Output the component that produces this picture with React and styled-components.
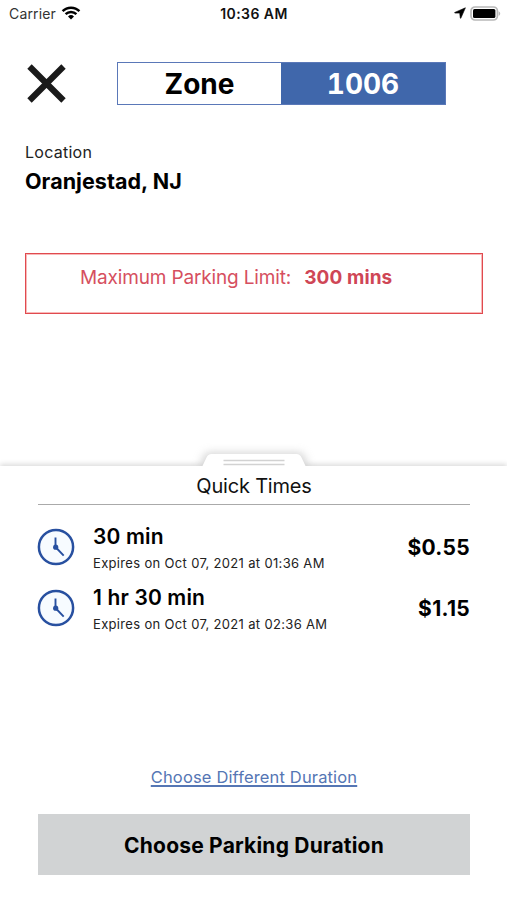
import React from 'react'
import styled, { createGlobalStyle } from 'styled-components';

const quickTimes = [
  { id: 1, label: '30 min', expires: 'Expires on Oct 07, 2021 at 01:36 AM', price: '$0.55' },
  { id: 2, label: '1 hr 30 min', expires: 'Expires on Oct 07, 2021 at 02:36 AM', price: '$1.15' },
];

const WifiIcon = () => (
  <svg width="20" height="16" viewBox="0 0 20 16" fill="none" stroke="#000">
    <path d="M1.6 6.1a11.9 11.9 0 0 1 16.8 0" strokeWidth="2.5" />
    <path d="M4.6 9.2a7.6 7.6 0 0 1 10.8 0" strokeWidth="2.4" />
    <path d="M10 14.6 7 11.5a4.3 4.3 0 0 1 6 0z" fill="#000" stroke="none" />
  </svg>
);

const LocationIcon = () => (
  <svg width="12" height="12" viewBox="0 0 12 12">
    <path d="M11.4.8.8 5.4c-.3.2-.3.7.1.7h4.8l.6 4.900c0 .4.4.5.6.1z" fill="#000" stroke="#000" strokeWidth=".6" />
  </svg>
);

const BatteryIcon = () => (
  <svg width="31" height="15" viewBox="0 0 31 15">
    <rect x="1" y="1" width="26.4" height="13" rx="4" fill="#fff" stroke="#b8b8b8" strokeWidth="1.7" />
    <rect x="3" y="3" width="22.4" height="9" rx="1.5" fill="#000" />
    <path d="M28.6 5.2v4.6c1-.4 1.6-1.3 1.6-2.3s-.6-1.9-1.6-2.3z" fill="#b8b8b8" />
  </svg>
);

const CloseIcon = () => (
  <svg width="40" height="40" viewBox="0 0 40 40">
    <path d="M2.5 2.5l34 34M36.5 2.5l-34 34" stroke="#1a1a1a" strokeWidth="6.2" />
  </svg>
);

const ClockIcon = () => (
  <svg width="38" height="38" viewBox="0 0 38 38" fill="none" stroke="#2850a0">
    <circle cx="19" cy="19" r="17.1" fill="#f7fbff" strokeWidth="2.5" />
    <path d="M18.5 9.6V19l8.2 8.7" strokeWidth="1.9" />
    <circle cx="18.7" cy="19.2" r="2.6" fill="#2850a0" stroke="none" />
  </svg>
);

// White tab that sticks out of the top of the sheet
const HandleShape = () => (
  <svg width="120" height="24" viewBox="0 0 120 24" overflow="visible">
    <defs>
      <filter id="handleShadow" x="-20%" y="-100%" width="140%" height="300%">
        <feGaussianBlur stdDeviation="4" />
      </filter>
      <clipPath id="aboveSheet">
        <rect x="-15" y="-12" width="150" height="29" />
      </clipPath>
    </defs>
    <g clipPath="url(#aboveSheet)">
      <path d="M5 19l5-12q1.5-3.5 5-3.5h90q3.5 0 5 3.5l5 12z" fill="#aaa" filter="url(#handleShadow)" opacity=".5" />
    </g>
    <path d="M8 18l4.5-9.5q1.5-3.5 5-3.5h85q3.5 0 5 3.5l4.5 9.5z" fill="#fff" />
    <path d="M29.5 11.5h61M29.5 15.5h61" stroke="#d2d2d2" strokeWidth="1.3" />
  </svg>
);

const App = () => {
  return (
    <Screen>
      <GlobalStyle />
      <StatusBar>
        <Carrier>Carrier <WifiIcon /></Carrier>
        <Clock>10:36 AM</Clock>
        <Indicators>
          <LocationIcon />
          <BatteryIcon />
        </Indicators>
      </StatusBar>

      <Header>
        <CloseButton aria-label="Close"><CloseIcon /></CloseButton>
        <ZoneBox>
          <ZoneCell>Zone</ZoneCell>
          <ZoneCell $filled>1006</ZoneCell>
        </ZoneBox>
      </Header>

      <Location>
        <LocationLabel>Location</LocationLabel>
        <LocationName>Oranjestad, NJ</LocationName>
      </Location>

      <LimitBox>
        <LimitLabel>Maximum Parking Limit:</LimitLabel>
        <LimitValue>300 mins</LimitValue>
      </LimitBox>

      <Sheet>
        <Handle><HandleShape /></Handle>
        <SheetTitle>Quick Times</SheetTitle>
        <TimeList>
          {quickTimes.map((time) => (
            <TimeRow key={time.id}>
              <ClockIcon />
              <TimeText>
                <TimeLabel>{time.label}</TimeLabel>
                <Expires>{time.expires}</Expires>
              </TimeText>
              <Price>{time.price}</Price>
            </TimeRow>
          ))}
        </TimeList>
        <DurationLink href="#">Choose Different Duration</DurationLink>
        <DurationButton>Choose Parking Duration</DurationButton>
      </Sheet>
    </Screen>
  )
}

const GlobalStyle = createGlobalStyle`
  * {
    box-sizing: border-box;
  }

  body {
    margin: 0;
    background: #fff;
    font-family: Inter, "Liberation Sans", sans-serif;
    color: #000;
  }

  svg {
    display: block;
    flex-shrink: 0;
  }
`;

const Screen = styled.div`
  display: flex;
  flex-direction: column;
  width: 507px;
  height: 900px;
  overflow: hidden;
`;

const StatusBar = styled.div`
  display: grid;
  grid-template-columns: 1fr auto 1fr;
  align-items: center;
  height: 26px;
  padding: 0 6px 0 9px;
  font-size: 14px;
`;

const Carrier = styled.div`
  display: flex;
  align-items: center;
  gap: 5px;
  color: #333;
  letter-spacing: 0.15px;
`;

const Clock = styled.div`
  font-weight: 600;
  letter-spacing: 0.45px;
  color: #111;
  margin-right: 2px;
`;

const Indicators = styled.div`
  display: flex;
  align-items: center;
  justify-content: flex-end;
  gap: 4px;
`;

const Header = styled.div`
  display: flex;
  align-items: center;
  gap: 50px;
  height: 43px;
  margin-top: 36px;
  padding-left: 27px;
`;

const CloseButton = styled.button`
  padding: 0;
  border: none;
  background: none;
  cursor: pointer;
`;

const ZoneBox = styled.div`
  display: grid;
  grid-template-columns: 163px 1fr;
  width: 329px;
  height: 43px;
  border: 1px solid #5a78b8;
`;

const ZoneCell = styled.div`
  display: flex;
  align-items: center;
  justify-content: center;
  font-size: 28px;
  font-weight: 700;
  font-variant-numeric: tabular-nums;
  background: ${props => props.$filled ? '#4067ab' : '#fff'};
  color: ${props => props.$filled ? '#fff' : '#000'};
`;

const Location = styled.div`
  margin: 37px 0 0 25px;
`;

const LocationLabel = styled.div`
  line-height: 20px;
  font-size: 16px;
  letter-spacing: 0.25px;
  color: #222;
`;

const LocationName = styled.div`
  margin-top: 5px;
  line-height: 28px;
  font-size: 21.5px;
  font-weight: 700;
  letter-spacing: 0.05px;
`;

const LimitBox = styled.div`
  display: flex;
  gap: 13px;
  width: 458px;
  height: 61px;
  margin: 58px 0 0 25px;
  padding: 11px 0 0 54px;
  border: 1px solid #e04a4f;
  box-shadow: inset 0 0 0 1px rgba(240, 80, 80, 0.4);
  line-height: 26px;
  font-size: 19px;
  color: #d64f60;
`;

const LimitLabel = styled.span`
  letter-spacing: -0.15px;
`;

const LimitValue = styled.span`
  font-weight: 700;
  letter-spacing: 0.1px;
  color: #cf4656;
`;

const Sheet = styled.div`
  position: relative;
  display: flex;
  flex-direction: column;
  flex: 1;
  margin-top: 152px;
  padding: 0 37px 25px 38px;
  background: #fff;
  box-shadow: 0 -2px 5px rgba(0, 0, 0, 0.14);
`;

const Handle = styled.div`
  position: absolute;
  top: -17px;
  left: 194px;
`;

const SheetTitle = styled.div`
  position: relative;
  height: 39px;
  border-bottom: 1px solid #aaa;
  line-height: 40px;
  font-size: 20px;
  letter-spacing: -0.2px;
  text-align: center;
  color: #111;
`;

const TimeList = styled.div`
  margin: 11px 0 0 -1px;
`;

const TimeRow = styled.div`
  display: flex;
  align-items: center;
  height: 61px;
`;

const TimeText = styled.div`
  flex: 1;
  margin: -2px 0 0 18px;
`;

const TimeLabel = styled.div`
  line-height: 28px;
  font-size: 21px;
  font-weight: 600;
  letter-spacing: 0.15px;
`;

const Expires = styled.div`
  margin: 2px 0 -5px;
  line-height: 20px;
  font-size: 13px;
  letter-spacing: 0.33px;
  color: #222;
`;

const Price = styled.div`
  margin-top: 2px;
  font-size: 21px;
  font-weight: 700;
  letter-spacing: 0.3px;
`;

const DurationLink = styled.a`
  align-self: center;
  margin-top: auto;
  line-height: 22px;
  font-size: 16.5px;
  letter-spacing: 0.15px;
  color: #5576b4;
  text-decoration: underline;
  text-decoration-thickness: 1.5px;
  text-underline-offset: 2px;
`;

const DurationButton = styled.button`
  height: 61px;
  margin-top: 26px;
  padding: 2px 0 0;
  border: none;
  background: #d1d3d4;
  font-family: inherit;
  font-size: 21px;
  font-weight: 700;
  letter-spacing: 0.2px;
  color: #000;
  cursor: pointer;
`;

export default App
